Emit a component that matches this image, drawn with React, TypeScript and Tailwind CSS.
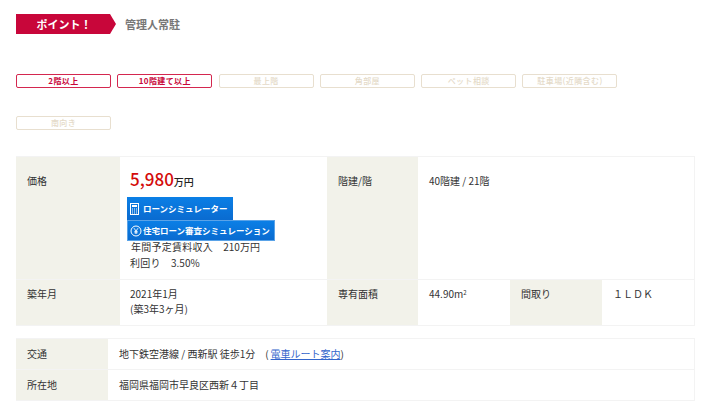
import React from 'react';

const activeTags = ['2階以上', '10階建て以上'];
const otherTags = ['最上階', '角部屋', 'ペット相談', '駐車場(近隣含む)'];

const labelClass = 'bg-[#f2f2ea] pl-[11px] text-[10px] leading-[15px] text-[#333]';
const valueClass = 'bg-white text-[10px] leading-[15px] text-[#333]';

const Tag = ({ text, active }: { text: string; active?: boolean }) => (
  <div
    className={
      'flex h-[14px] w-[95px] items-center justify-center rounded-[2px] border text-[8px] tracking-[0.4px] ' +
      (active ? 'border-[#d4274f] font-bold text-[#c8063a]' : 'border-[#e8dfcf] font-medium text-[#e4dac8]')
    }
  >
    {text}
  </div>
);

const CalcIcon = () => (
  <svg width="10" height="12" viewBox="0 0 10 12" fill="none" className="shrink-0">
    <rect x="0.5" y="0.5" width="8" height="11" stroke="white" />
    <rect x="2" y="2" width="5" height="2" fill="white" />
    <path d="M2 6h1M4 6h1M6 6h1M2 8h1M4 8h1M6 8h1M2 10h1M4 10h1M6 10h1" stroke="white" />
  </svg>
);

const YenIcon = () => (
  <svg width="12" height="12" viewBox="0 0 12 12" fill="none" className="shrink-0">
    <circle cx="6" cy="6" r="5" stroke="white" />
    <path d="M4 3.2L6 6l2-2.8M6 6v3M4.4 6.4h3.2M4.4 7.8h3.2" stroke="white" strokeWidth="0.9" />
  </svg>
);

export default function App() {
  return (
    <div className="h-[409px] w-[720px] overflow-hidden bg-white font-['Noto_Sans_CJK_JP','Noto_Sans',sans-serif]">
      {/* Point header */}
      <div className="flex items-center pl-4 pt-[14px]">
        <div className="flex h-5 w-[100px] items-center justify-center bg-[#c8063a] pr-1 text-[11px] font-bold text-white [clip-path:polygon(0_0,94%_0,100%_50%,94%_100%,0_100%)]">
          ポイント！
        </div>
        <span className="ml-[9px] text-[11px] font-bold text-[#777]">管理人常駐</span>
      </div>

      {/* Tags */}
      <div className="flex gap-x-[6.3px] pl-4 pt-[40px]">
        {activeTags.map((t) => (
          <Tag key={t} text={t} active />
        ))}
        {otherTags.map((t) => (
          <Tag key={t} text={t} />
        ))}
      </div>
      <div className="pl-4 pt-[28px]">
        <Tag text="南向き" />
      </div>

      {/* Main table */}
      <div className="mx-4 mt-[26px] grid w-[679px] grid-cols-[104px_207px_91px_92px_92px_92px] grid-rows-[122px_45px] gap-y-px border-y border-r border-[#f3f3f3] bg-[#f3f3f3]">
        <div className={labelClass + ' pt-[16px]'}>価格</div>
        <div className={valueClass + ' pt-[9px]'}>
          <div className="flex items-baseline pl-[10px] leading-[26px]">
            <span className="text-[17px] font-medium text-[#d40b0b]">5,980</span>
            <span className="text-[10px] font-medium text-[#222]">万円</span>
          </div>
          <div className="ml-[7px] mt-[2px] flex h-[23px] w-[106px] items-center gap-[3px] bg-linear-to-b from-[#0b7fe6] to-[#0a6bd0] pl-[3px] text-[8.5px] font-bold text-white">
            <CalcIcon />
            ローンシミュレーター
          </div>
          <div className="ml-[7px] flex h-[21px] w-[148px] items-center gap-[1px] border border-[#5aa3e8] bg-linear-to-b from-[#0b7fe6] to-[#0a6bd0] pl-[2px] text-[8.5px] font-bold text-white">
            <YenIcon />
            住宅ローン審査シミュレーション
          </div>
          <div className="-mt-[2px] pl-[11px] text-[10px] leading-[15px]">
            <span className="tracking-[0.25px]">年間予定賃料収入　</span>210万円
          </div>
          <div className="mt-px pl-[10px] text-[10px] leading-[15px]">
            <span className="tracking-[0.25px]">利回り　</span>3.50%
          </div>
        </div>
        <div className={labelClass + ' pt-[16px]'}>階建/階</div>
        <div className={valueClass + ' col-span-3 pl-[11px] pt-[16px]'}>40階建 / 21階</div>

        <div className={labelClass + ' pt-[6px]'}>築年月</div>
        <div className={valueClass + ' pl-[10px] pt-[6px]'}>
          <div>2021年1月</div>
          <div>(築3年3ヶ月)</div>
        </div>
        <div className={labelClass + ' pt-[6px]'}>専有面積</div>
        <div className={valueClass + ' pl-[11px] pt-[6px]'}>
          44.90m<sup className="text-[6px]">2</sup>
        </div>
        <div className={labelClass + ' pt-[6px]'}>間取り</div>
        <div className={valueClass + ' pl-[11px] pt-[6px]'}>１ＬＤＫ</div>
      </div>

      {/* Access table */}
      <div className="mx-4 mt-[12px] grid w-[679px] grid-cols-[92px_586px] grid-rows-[30px_30px] gap-y-px border-y border-r border-[#f3f3f3] bg-[#f3f3f3]">
        <div className={labelClass + ' flex items-center pb-[1px]'}>交通</div>
        <div className={valueClass + ' flex items-center pb-[1px] pl-[11px]'}>
          地下鉄空港線 / 西新駅 徒歩1分　(
          <a href="#" className="ml-[2px] text-[#3366cc] underline">
            電車ルート案内
          </a>
          )
        </div>
        <div className={labelClass + ' flex items-center pb-[1px]'}>所在地</div>
        <div className={valueClass + ' flex items-center pb-[1px] pl-[11px]'}>福岡県福岡市早良区西新４丁目</div>
      </div>
    </div>
  );
}
